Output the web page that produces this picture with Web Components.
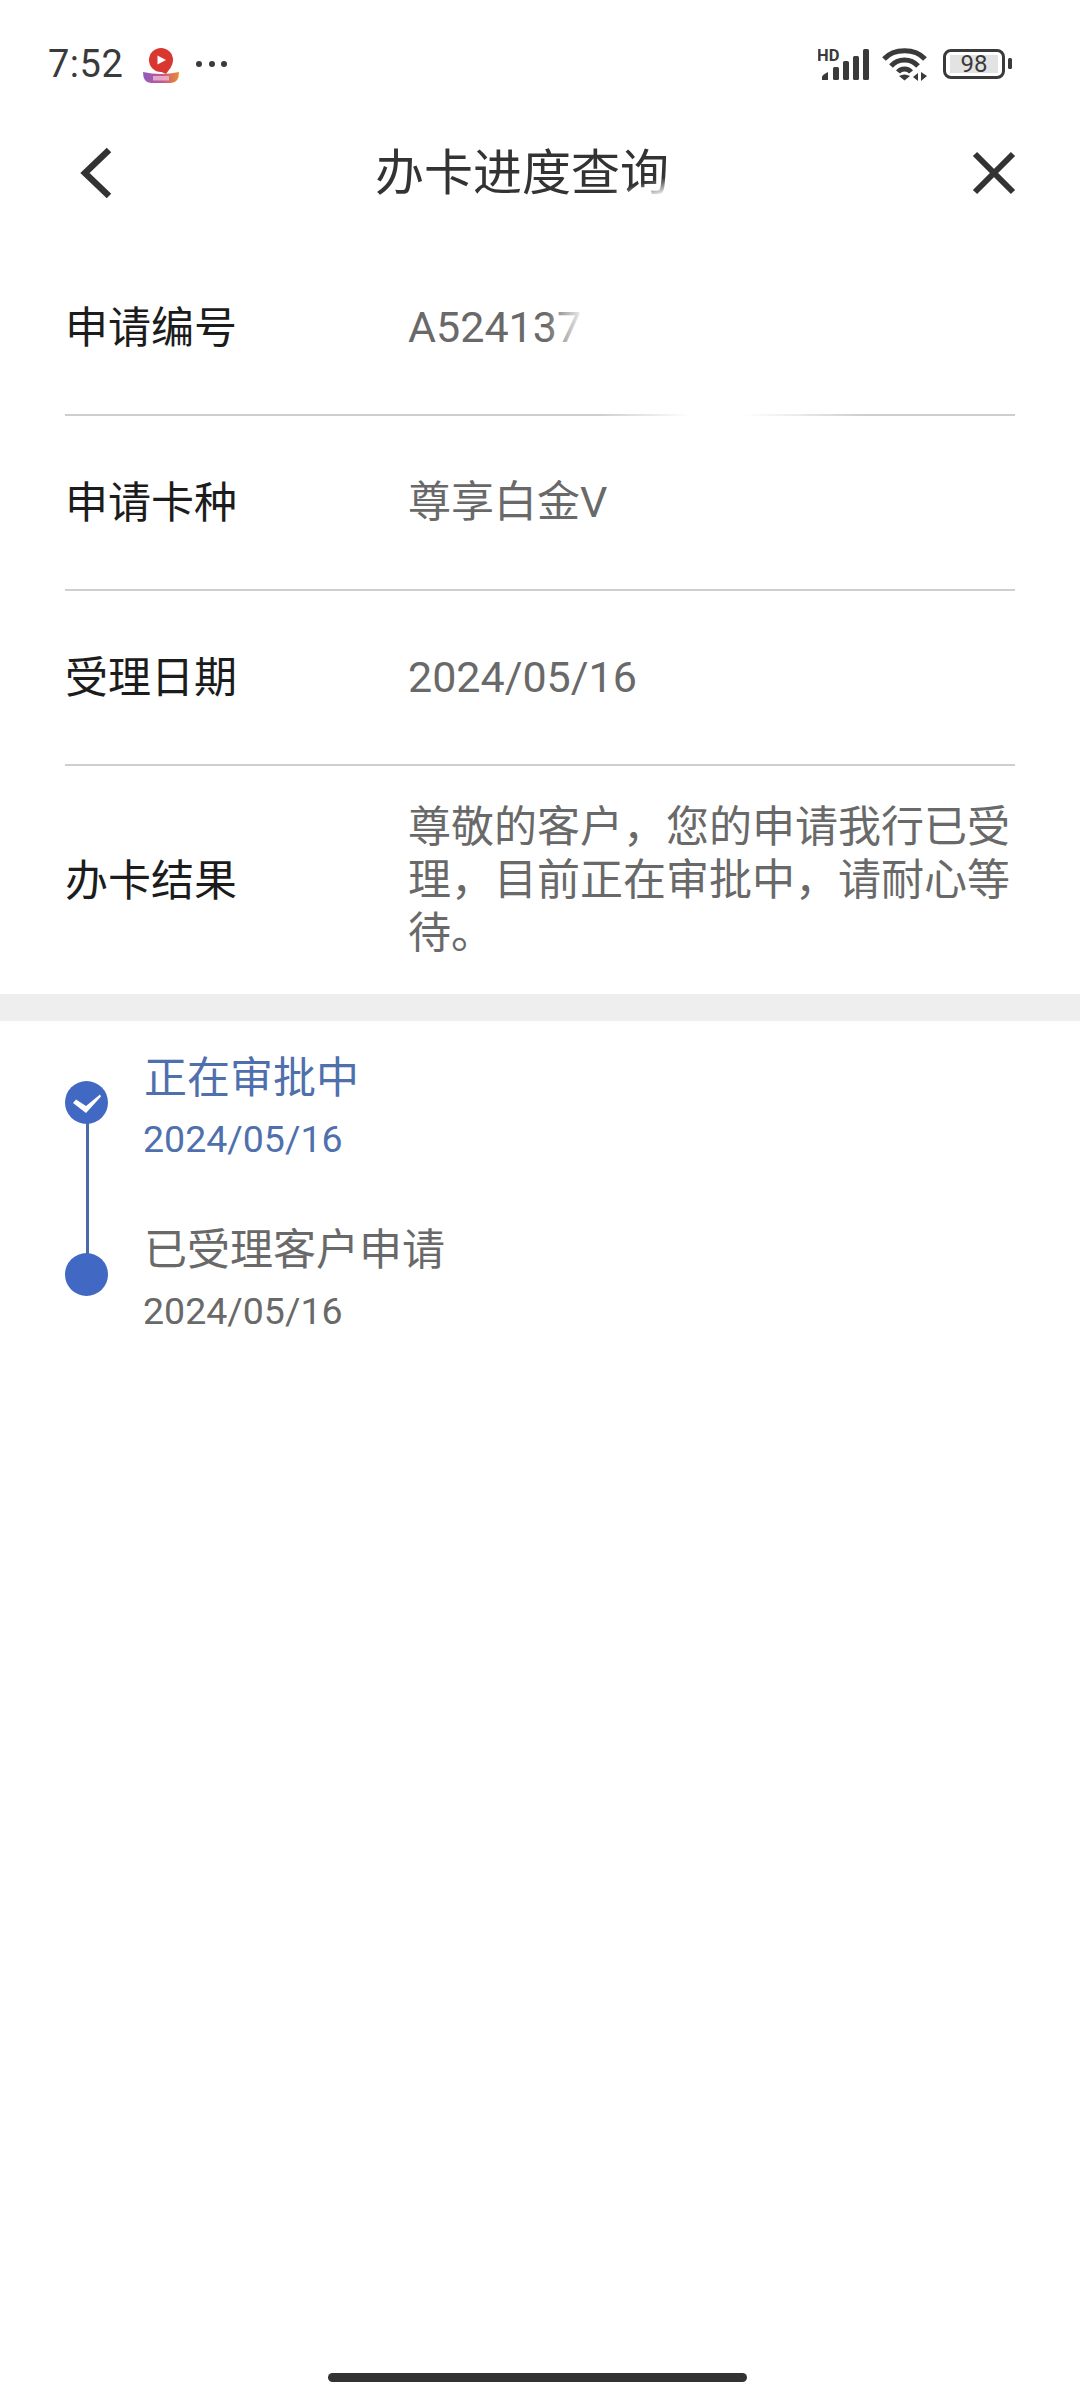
<!DOCTYPE html>
<html lang="zh">
<head>
<meta charset="utf-8">
<title>办卡进度查询</title>
<style>
  html, body { margin: 0; background: #fff; }
  body {
    width: 1080px;
    height: 2400px;
    overflow: hidden;
    font-family: Roboto, "Noto Sans CJK SC", sans-serif;
    display: flex;
    flex-direction: column;
  }
</style>
</head>
<body>
<status-bar></status-bar>
<nav-bar>办卡进度查询</nav-bar>
<info-row label="申请编号" masked>A524137</info-row>
<info-row label="申请卡种">尊享白金V</info-row>
<info-row label="受理日期">2024/05/16</info-row>
<info-row label="办卡结果" multi>尊敬的客户，您的申请我行已受理，目前正在审批中，请耐心等待。</info-row>
<gray-band></gray-band>
<progress-step date="2024/05/16" state="active">正在审批中</progress-step>
<progress-step date="2024/05/16" state="last">已受理客户申请</progress-step>
<home-bar></home-bar>

<script>
class StatusBar extends HTMLElement {
  connectedCallback() {
    this.attachShadow({ mode: "open" }).innerHTML = `
      <style>
        :host { display: flex; align-items: center; box-sizing: border-box; height: 96px; padding: 32px 67px 0 48px; color: #3a3a3a; }
        .time { font-size: 38px; letter-spacing: 0.5px; width: 94px; }
        .app { width: 38px; height: 38px; margin-right: 16px; }
        .dots { display: flex; gap: 6.5px; }
        .dots i { width: 6px; height: 6px; border-radius: 50%; background: #3a3a3a; }
        .right { margin-left: auto; display: flex; align-items: center; }
        svg { display: block; }
        .battery { position: relative; }
        .battery span { position: absolute; left: 0; width: 62px; top: 0; line-height: 30px; text-align: center; font-size: 24px; color: #3a3a3a; }
      </style>
      <span class="time">7:52</span>
      <svg class="app" viewBox="0 0 38 38">
        <defs><linearGradient id="boat" x1="0" x2="1" y1="0" y2="0">
          <stop offset="0" stop-color="#8e5bc4"/><stop offset=".55" stop-color="#c45a8c"/><stop offset="1" stop-color="#ee8a2e"/>
        </linearGradient></defs>
        <circle cx="19" cy="15" r="12" fill="#d8382f"/>
        <path d="M15 25 L24 29 L29 22 Z" fill="#d8382f"/>
        <path d="M15.5 10.5 L24 15 L15.5 19.5 Z" fill="#fff"/>
        <path d="M1 27 Q19 31 37 27 Q37 38 29 38 L9 38 Q1 38 1 27 Z" fill="url(#boat)"/>
        <rect x="11" y="31" width="16" height="4.5" fill="#f6c9e0" opacity=".7"/>
      </svg>
      <span class="dots"><i></i><i></i><i></i></span>
      <div class="right">
        <svg width="52" height="34" viewBox="0 0 52 34" fill="#3a3a3a" style="margin-right:11px">
          <text x="-1" y="14" font-family="Roboto" font-weight="700" font-size="16.5">HD</text>
          <path d="M4 33 L4 30 Q4 28 10 25 L10 33 Z"/>
          <rect x="15" y="20" width="6" height="13" rx="1.5"/>
          <rect x="25" y="14" width="6" height="19" rx="1.5"/>
          <rect x="35" y="9" width="6" height="24" rx="1.5"/>
          <rect x="45" y="2" width="6" height="31" rx="1.5"/>
        </svg>
        <svg width="48" height="34" viewBox="0 0 48 34" fill="none" stroke="#3a3a3a" stroke-width="5" style="margin-right:14px">
          <path d="M3 12 C13 1 34 1 44 12"/>
          <path d="M10 19 C17 11 30 11 37 19"/>
          <path d="M17 25 C20 21 27 21 30 25"/>
          <path d="M18 29 L23.5 33.5 L29 29 Q23.5 26 18 29 Z" fill="#3a3a3a" stroke="none"/>
          <path d="M32 30 L37 26 L37 34 Z M40 25 L40 34 L46 29 Z" fill="#3a3a3a" stroke="none"/>
        </svg>
        <div class="battery">
          <svg width="70" height="30" viewBox="0 0 70 30">
            <rect x="1.5" y="1.5" width="59" height="27" rx="6.5" fill="none" stroke="#3a3a3a" stroke-width="3"/>
            <rect x="7" y="6" width="48" height="18" fill="#e3e3e3"/>
            <rect x="65" y="9" width="4" height="11" rx="1.5" fill="#3a3a3a"/>
          </svg>
          <span>98</span>
        </div>
      </div>
    `;
  }
}

class NavBar extends HTMLElement {
  connectedCallback() {
    this.attachShadow({ mode: "open" }).innerHTML = `
      <style>
        :host { display: flex; align-items: center; justify-content: space-between; box-sizing: border-box; height: 145px; padding: 8px 62px 0 78px; position: relative; color: #333; }
        .title { position: absolute; left: 0; right: 36px; top: 37px; text-align: center; font-size: 49px; pointer-events: none; }
        svg { display: block; }
        .fade { position: absolute; left: 600px; top: 78px; width: 72px; height: 26px; background: linear-gradient(165deg, rgba(255,255,255,0) 45%, rgba(255,255,255,.9) 80%); }
      </style>
      <svg width="36" height="54" viewBox="0 0 36 54" fill="none" stroke="#333" stroke-width="6.5"><path d="M31 4 L7 27 L31 50"/></svg>
      <div class="title"><slot></slot></div>
      <svg width="48" height="48" viewBox="0 0 48 48" fill="none" stroke="#333" stroke-width="6"><path d="M5 5 L43 43 M43 5 L5 43"/></svg>
      <div class="fade"></div>
    `;
  }
}

class InfoRow extends HTMLElement {
  connectedCallback() {
    const multi = this.hasAttribute("multi");
    const masked = this.hasAttribute("masked");
    this.attachShadow({ mode: "open" }).innerHTML = `
      <style>
        :host { display: block; padding: 0 65px; position: relative; }
        .row { display: flex; align-items: center; box-sizing: border-box; height: ${multi ? 228 : 175}px; border-bottom: ${multi ? 0 : 2}px solid #cfcfcf; }
        .label { width: 343px; flex: none; font-size: 43px; color: #1c1c1c; margin-top: -7px; }
        .value { font-size: 43px; line-height: 53px; color: #696969; width: 608px; margin-top: ${multi ? 1 : 0}px; }
        .mask { position: absolute; left: 546px; top: 40px; width: 50px; height: 110px;
          background: linear-gradient(90deg, rgba(255,255,255,0), #fff 80%); }
        .line-mask { position: absolute; left: 600px; top: 172px; width: 260px; height: 4px;
          background: linear-gradient(90deg, rgba(255,255,255,0), #fff 35%, #fff 55%, rgba(255,255,255,.6) 75%, rgba(255,255,255,0)); }
      </style>
      <div class="row">
        <div class="label">${this.getAttribute("label")}</div>
        <div class="value"><slot></slot></div>
      </div>
      ${masked ? '<div class="mask"></div><div class="line-mask"></div>' : ""}
    `;
  }
}

class GrayBand extends HTMLElement {
  connectedCallback() {
    this.attachShadow({ mode: "open" }).innerHTML = `
      <style>:host { display: block; height: 27px; background: #eeeeee; }</style>
    `;
  }
}

class ProgressStep extends HTMLElement {
  connectedCallback() {
    const active = this.getAttribute("state") === "active";
    const color = active ? "#4f70ad" : "#696969";
    this.attachShadow({ mode: "open" }).innerHTML = `
      <style>
        :host { display: grid; grid-template-columns: 79px 1fr; padding-left: 65px; height: 172px; box-sizing: border-box; position: relative; color: ${color}; }
        .track { position: relative; }
        .dot { position: absolute; left: 0; top: 60px; width: 43px; height: 43px; border-radius: 50%; background: #4169c4; z-index: 1; }
        .line { position: absolute; left: 21px; top: 100px; width: 3px; height: 134px; background: #4a6ba8; }
        .dot svg { display: block; }
        .text { padding-top: 32px; }
        .title { font-size: 43px; line-height: 50px; }
        .date { font-size: 37.5px; line-height: 44px; margin: 14px 0 0 -1px; }
      </style>
      <div class="track">
        ${active ? '<div class="line"></div>' : ""}
        <div class="dot">${active ? '<svg width="43" height="43" viewBox="0 0 43 43" fill="#fff"><path d="M8 22 L11 18.5 L21 25 L35 13.5 L36 15.5 L21 32 Z"/></svg>' : ""}</div>
      </div>
      <div class="text">
        <div class="title"><slot></slot></div>
        <div class="date">${this.getAttribute("date")}</div>
      </div>
    `;
  }
}

class HomeBar extends HTMLElement {
  connectedCallback() {
    this.attachShadow({ mode: "open" }).innerHTML = `
      <style>
        :host { display: flex; justify-content: center; margin-top: auto; padding: 0 6px 18px 0; }
        div { width: 419px; height: 9px; border-radius: 5px; background: #333; }
      </style>
      <div></div>
    `;
  }
}

customElements.define("status-bar", StatusBar);
customElements.define("nav-bar", NavBar);
customElements.define("info-row", InfoRow);
customElements.define("gray-band", GrayBand);
customElements.define("progress-step", ProgressStep);
customElements.define("home-bar", HomeBar);
</script>
</body>
</html>
